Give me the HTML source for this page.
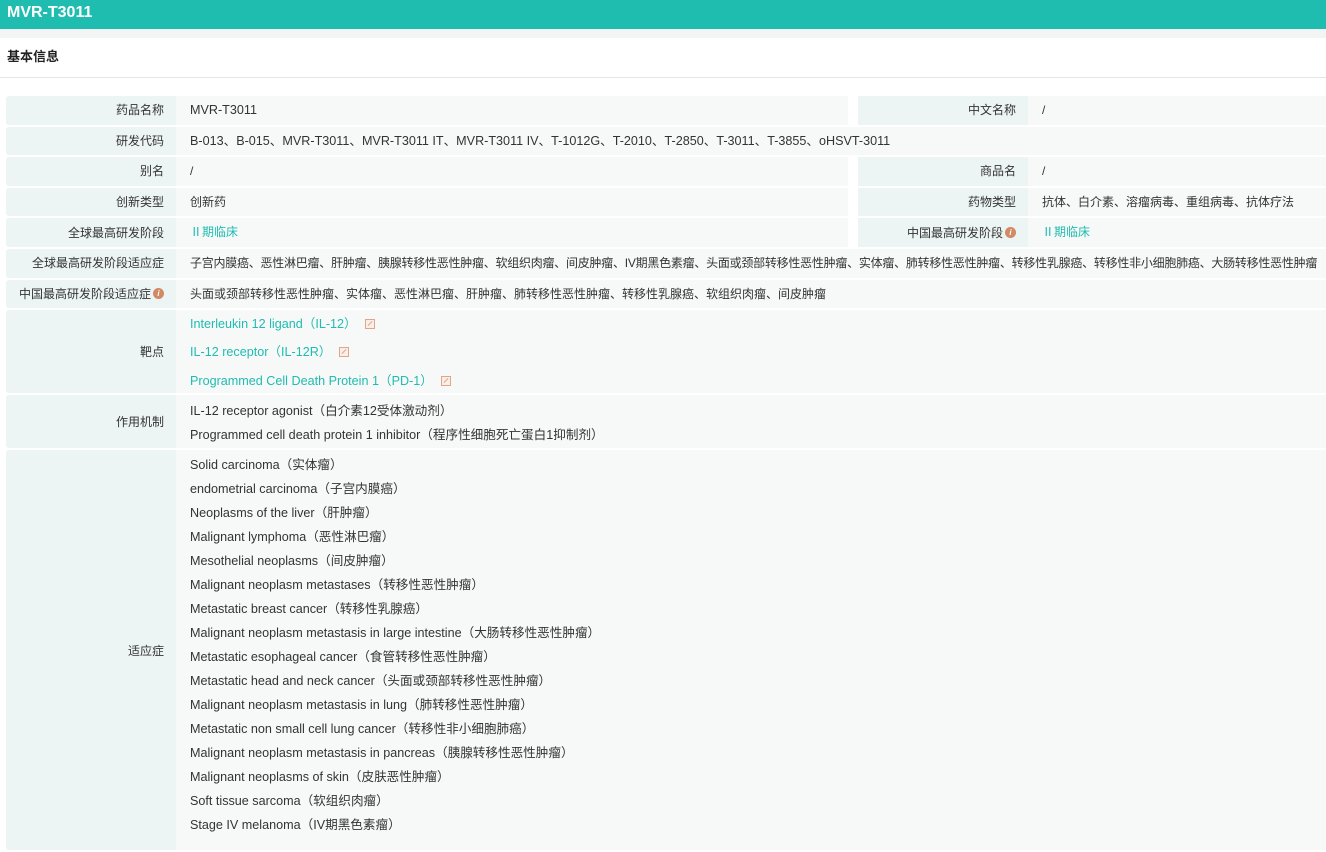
<!DOCTYPE html>
<html><head><meta charset="utf-8"><style>
*{margin:0;padding:0;box-sizing:border-box}
body{width:1326px;height:841px;overflow:hidden;background:#fff;font-family:"Liberation Sans","Noto Sans CJK SC",sans-serif;font-size:12px;color:#333}
.top{height:29px;background:#1fbcb0;color:#fff;font-weight:bold;font-size:16px;line-height:25px;padding-left:7px}
.gap{height:9px;background:#f3f5f5}
.sec{height:40px;line-height:38px;padding-left:7px;font-weight:bold;font-size:13px;border-bottom:1px solid #e6e6e6;color:#222}
.tbl{position:absolute;left:6px;top:96px;width:1320px}
.row{display:flex;margin-bottom:2px}
.l{width:170px;background:#edf4f4;text-align:right;padding-right:12px;display:flex;align-items:center;justify-content:flex-end;border-radius:3px 0 0 3px}
.v{background:#f7f9f9;padding-left:14px;flex:1}
.v1{width:672px;flex:none}
.sp{width:10px;background:#fff}
.l2{width:170px;background:#edf4f4;display:flex;align-items:center;justify-content:flex-end;padding-right:12px}
.h29{height:28.6px;line-height:28px}
.h29 .l,.h29 .l2{height:28.6px}
.en{font-size:12.6px}
.ln{color:#1fbcb0}
.i{display:inline-block;width:11px;height:11px;border-radius:50%;background:#d08a64;color:#fff;font-size:8px;line-height:11px;text-align:center;font-style:italic;margin-left:2px;font-weight:bold}
.ic{display:inline-block;width:10px;height:10px;border:1px solid #e0a68a;margin-left:8px;vertical-align:-1px;position:relative;background:#fbeee7}
.ic:after{content:"";position:absolute;left:1px;top:3px;width:6px;height:1px;background:#e0a68a;transform:rotate(-45deg)}
.lines div{height:24px;line-height:24px}
.t div{height:29px;line-height:29px}
</style></head><body>
<div class="top">MVR-T3011</div>
<div class="gap"></div>
<div class="sec">基本信息</div>
<div class="tbl">
<div class="row h29"><div class="l">药品名称</div><div class="v v1 en">MVR-T3011</div><div class="sp"></div><div class="l2">中文名称</div><div class="v">/</div></div>
<div class="row h29"><div class="l">研发代码</div><div class="v en">B-013、B-015、MVR-T3011、MVR-T3011 IT、MVR-T3011 IV、T-1012G、T-2010、T-2850、T-3011、T-3855、oHSVT-3011</div></div>
<div class="row h29"><div class="l">别名</div><div class="v v1">/</div><div class="sp"></div><div class="l2">商品名</div><div class="v">/</div></div>
<div class="row h29"><div class="l">创新类型</div><div class="v v1">创新药</div><div class="sp"></div><div class="l2">药物类型</div><div class="v">抗体、白介素、溶瘤病毒、重组病毒、抗体疗法</div></div>
<div class="row h29"><div class="l">全球最高研发阶段</div><div class="v v1 ln">Ⅱ期临床</div><div class="sp"></div><div class="l2">中国最高研发阶段<span class="i">i</span></div><div class="v ln">Ⅱ期临床</div></div>
<div class="row h29"><div class="l">全球最高研发阶段适应症</div><div class="v" style="white-space:nowrap;overflow:hidden;letter-spacing:-0.25px">子宫内膜癌、恶性淋巴瘤、肝肿瘤、胰腺转移性恶性肿瘤、软组织肉瘤、间皮肿瘤、IV期黑色素瘤、头面或颈部转移性恶性肿瘤、实体瘤、肺转移性恶性肿瘤、转移性乳腺癌、转移性非小细胞肺癌、大肠转移性恶性肿瘤</div></div>
<div class="row h29"><div class="l">中国最高研发阶段适应症<span class="i">i</span></div><div class="v">头面或颈部转移性恶性肿瘤、实体瘤、恶性淋巴瘤、肝肿瘤、肺转移性恶性肿瘤、转移性乳腺癌、软组织肉瘤、间皮肿瘤</div></div>
<div class="row"><div class="l" style="height:83px">靶点</div><div class="v t ln en" style="height:83px;padding-top:1px"><div style="height:27px;line-height:27px">Interleukin 12 ligand（IL-12）<span class="ic"></span></div><div>IL-12 receptor（IL-12R）<span class="ic"></span></div><div>Programmed Cell Death Protein 1（PD-1）<span class="ic"></span></div></div></div>
<div class="row"><div class="l" style="height:53px">作用机制</div><div class="v lines en" style="height:53px;padding-top:4px"><div>IL-12 receptor agonist（白介素12受体激动剂）</div><div>Programmed cell death protein 1 inhibitor（程序性细胞死亡蛋白1抑制剂）</div></div></div>
<div class="row"><div class="l" style="height:400px">适应症</div><div class="v lines en" style="height:400px;padding-top:3px">
<div>Solid carcinoma（实体瘤）</div><div>endometrial carcinoma（子宫内膜癌）</div><div>Neoplasms of the liver（肝肿瘤）</div><div>Malignant lymphoma（恶性淋巴瘤）</div><div>Mesothelial neoplasms（间皮肿瘤）</div><div>Malignant neoplasm metastases（转移性恶性肿瘤）</div><div>Metastatic breast cancer（转移性乳腺癌）</div><div>Malignant neoplasm metastasis in large intestine（大肠转移性恶性肿瘤）</div><div>Metastatic esophageal cancer（食管转移性恶性肿瘤）</div><div>Metastatic head and neck cancer（头面或颈部转移性恶性肿瘤）</div><div>Malignant neoplasm metastasis in lung（肺转移性恶性肿瘤）</div><div>Metastatic non small cell lung cancer（转移性非小细胞肺癌）</div><div>Malignant neoplasm metastasis in pancreas（胰腺转移性恶性肿瘤）</div><div>Malignant neoplasms of skin（皮肤恶性肿瘤）</div><div>Soft tissue sarcoma（软组织肉瘤）</div><div>Stage IV melanoma（IV期黑色素瘤）</div>
</div></div>
</div>
</body></html>
